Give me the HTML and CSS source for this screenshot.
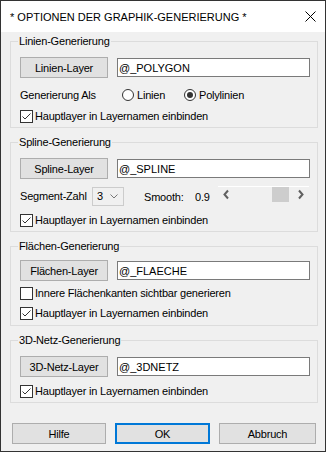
FILE: index.html
```html
<!DOCTYPE html>
<html>
  <head>
    <meta charset="utf-8" />
    <title>Optionen der Graphik-Generierung</title>
    <link rel="stylesheet" href="styles.css">
  </head>

  <body>
    <div class="window">
      <div class="titlebar">
        <span class="title">* OPTIONEN DER GRAPHIK-GENERIERUNG *</span>
        <svg class="close" width="11" height="11" viewBox="0 0 11 11">
          <path d="M0.5 0.5 L10.5 10.5 M10.5 0.5 L0.5 10.5" stroke="#000" stroke-width="1" fill="none" />
        </svg>
      </div>

      <div class="content">
        <!-- Linien -->
        <fieldset class="group group-lines">
          <legend>Linien-Generierung</legend>
          <div class="layer-row">
            <button class="btn layer-btn">Linien-Layer</button>
            <input class="field" type="text" value="@_POLYGON" />
          </div>
          <div class="opt-row">
            <span class="opt-label">Generierung Als</span>
            <span class="radio"><span class="dot"></span>Linien</span>
            <span class="radio"><span class="dot on"></span>Polylinien</span>
          </div>
          <div class="check">
            <svg class="box" width="13" height="13" viewBox="0 0 13 13">
              <rect x="0.5" y="0.5" width="12" height="12" fill="#fff" stroke="#333" />
              <path d="M2.5 6.5 L5 9 L10.5 3.5" stroke="#333" fill="none" />
            </svg>
            <span>Hauptlayer in Layernamen einbinden</span>
          </div>
        </fieldset>

        <!-- Spline -->
        <fieldset class="group group-spline">
          <legend>Spline-Generierung</legend>
          <div class="layer-row">
            <button class="btn layer-btn">Spline-Layer</button>
            <input class="field" type="text" value="@_SPLINE" />
          </div>
          <div class="seg-row">
            <span class="seg-label">Segment-Zahl</span>
            <span class="combo">
              <span>3</span>
              <svg width="8" height="5" viewBox="0 0 8 5">
                <path d="M0.5 0.5 L4 4 L7.5 0.5" stroke="#777" fill="none" />
              </svg>
            </span>
            <span class="smooth-label">Smooth:</span>
            <span class="smooth-value">0.9</span>
            <div class="scroll">
              <svg class="arrow" width="17" height="15" viewBox="0 0 17 15">
                <path d="M10 3.5 L6.5 7.5 L10 11.5" stroke="#606060" stroke-width="2" fill="none" />
              </svg>
              <div class="track"><div class="thumb" style="margin-left: 37px"></div></div>
              <svg class="arrow" width="17" height="15" viewBox="0 0 17 15">
                <path d="M7 3.5 L10.5 7.5 L7 11.5" stroke="#606060" stroke-width="2" fill="none" />
              </svg>
            </div>
          </div>
          <div class="check">
            <svg class="box" width="13" height="13" viewBox="0 0 13 13">
              <rect x="0.5" y="0.5" width="12" height="12" fill="#fff" stroke="#333" />
              <path d="M2.5 6.5 L5 9 L10.5 3.5" stroke="#333" fill="none" />
            </svg>
            <span>Hauptlayer in Layernamen einbinden</span>
          </div>
        </fieldset>

        <!-- Flaechen -->
        <fieldset class="group group-faces">
          <legend>Flächen-Generierung</legend>
          <div class="layer-row">
            <button class="btn layer-btn">Flächen-Layer</button>
            <input class="field" type="text" value="@_FLAECHE" />
          </div>
          <div class="check">
            <svg class="box" width="13" height="13" viewBox="0 0 13 13">
              <rect x="0.5" y="0.5" width="12" height="12" fill="#fff" stroke="#333" />
            </svg>
            <span>Innere Flächenkanten sichtbar generieren</span>
          </div>
          <div class="check">
            <svg class="box" width="13" height="13" viewBox="0 0 13 13">
              <rect x="0.5" y="0.5" width="12" height="12" fill="#fff" stroke="#333" />
              <path d="M2.5 6.5 L5 9 L10.5 3.5" stroke="#333" fill="none" />
            </svg>
            <span>Hauptlayer in Layernamen einbinden</span>
          </div>
        </fieldset>

        <!-- 3D-Netz -->
        <fieldset class="group group-mesh">
          <legend>3D-Netz-Generierung</legend>
          <div class="layer-row">
            <button class="btn layer-btn">3D-Netz-Layer</button>
            <input class="field" type="text" value="@_3DNETZ" />
          </div>
          <div class="check">
            <svg class="box" width="13" height="13" viewBox="0 0 13 13">
              <rect x="0.5" y="0.5" width="12" height="12" fill="#fff" stroke="#333" />
              <path d="M2.5 6.5 L5 9 L10.5 3.5" stroke="#333" fill="none" />
            </svg>
            <span>Hauptlayer in Layernamen einbinden</span>
          </div>
        </fieldset>

        <div class="actions">
          <button class="btn">Hilfe</button>
          <button class="btn btn-default">OK</button>
          <button class="btn">Abbruch</button>
        </div>
      </div>
    </div>
  </body>
</html>
```

FILE: styles.css
```css
body {
  margin: 0;
  font-family: "Liberation Sans", Arial, sans-serif;
  font-size: 11px;
  letter-spacing: -0.2px;
  color: #000000;
}

.window {
  width: 326px;
  height: 452px;
  box-sizing: border-box;
  border: 1px solid #333333;
  background-color: #f0f0f0;
  display: flex;
  flex-direction: column;
}

.titlebar {
  height: 31px;
  flex: none;
  background-color: #ffffff;
  display: flex;
  align-items: center;
  justify-content: space-between;
  padding: 0 9px 0 9px;
}

.title {
  letter-spacing: 0;
}

.close {
  display: block;
}

.content {
  flex: 1;
  display: flex;
  flex-direction: column;
  padding: 1px 7px 0 9px;
}

.group {
  margin: 0 0 6px 0;
  padding: 8px 7px 3px 9px;
  border: 1px solid #dcdcdc;
  min-width: 0;
}

.group legend {
  padding: 0 1px;
  margin-left: -2px;
  line-height: 16px;
}

.group-faces {
  padding-top: 6px;
  padding-bottom: 4px;
}

.layer-row {
  display: flex;
  align-items: center;
  height: 21px;
}

.btn {
  font: inherit;
  letter-spacing: inherit;
  color: #000000;
  background-color: #e1e1e1;
  border: 1px solid #adadad;
  height: 21px;
  padding: 0;
  box-sizing: border-box;
}

.layer-btn {
  width: 88px;
}

.field {
  margin-left: 9px;
  width: 193px;
  height: 19px;
  box-sizing: border-box;
  border: 1px solid #7a7a7a;
  padding: 0 1px;
  font: inherit;
  letter-spacing: 0;
  color: #000000;
  background-color: #ffffff;
}

.opt-row {
  display: flex;
  align-items: center;
  height: 18px;
  margin-top: 8px;
}

.opt-label {
  width: 102px;
}

.radio {
  display: flex;
  align-items: center;
  gap: 3px;
  width: 62px;
}

.dot {
  width: 12px;
  height: 12px;
  box-sizing: border-box;
  border: 1px solid #333333;
  border-radius: 50%;
  background-color: #ffffff;
  display: flex;
  align-items: center;
  justify-content: center;
}

.dot.on::after {
  content: "";
  width: 6px;
  height: 6px;
  border-radius: 50%;
  background-color: #333333;
}

.check {
  display: flex;
  align-items: center;
  gap: 2px;
  height: 16px;
  margin-top: 4px;
}

.check .box {
  display: block;
}

.group-spline .check,
.group-mesh .check {
  margin-top: 6px;
}

.group-faces .check {
  margin-top: 4px;
}

.seg-row {
  display: flex;
  align-items: center;
  height: 20px;
  margin-top: 7px;
}

.seg-label {
  width: 72px;
}

.combo {
  width: 32px;
  height: 19px;
  box-sizing: border-box;
  border: 1px solid #cccccc;
  display: flex;
  align-items: center;
  justify-content: space-between;
  padding: 0 5px 0 4px;
}

.smooth-label {
  margin-left: 20px;
  width: 51px;
  padding-top: 2px;
}

.smooth-value {
  width: 17px;
  overflow: hidden;
  white-space: nowrap;
  padding-top: 2px;
}

.scroll {
  margin-left: 6px;
  width: 91px;
  height: 16px;
  box-sizing: border-box;
  border-top: 1px solid #ffffff;
  display: flex;
  align-self: flex-start;
}

.scroll .arrow {
  display: block;
  flex: none;
}

.track {
  flex: 1;
}

.thumb {
  width: 17px;
  height: 15px;
  background-color: #cdcdcd;
}

.actions {
  margin-top: auto;
  margin-bottom: 7px;
  padding-left: 2px;
  display: grid;
  grid-template-columns: 94px 95px 97px;
  gap: 9px;
}

.btn-default {
  border: 2px solid #0078d7;
}
```
